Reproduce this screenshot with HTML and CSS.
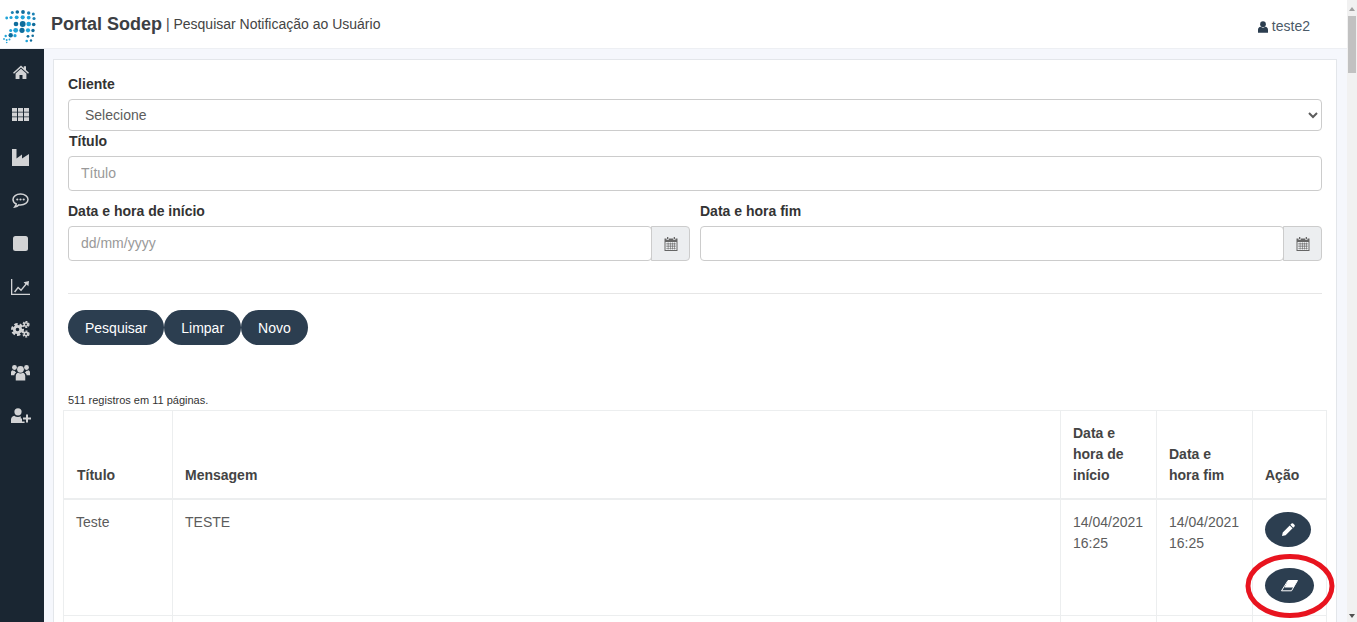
FILE: index.html
```html
<!DOCTYPE html>
<html lang="pt-BR">
<head>
<meta charset="utf-8">
<title>Portal Sodep</title>
<link rel="stylesheet" href="styles.css">
</head>
<body>
<div class="viewport">
  <div class="app">
    <header class="topbar">
      <div class="logo-box">
        <svg class="logo" viewBox="0 0 38 48" width="38" height="48" aria-hidden="true">
          <g fill="#1b82b5">
            <circle cx="12.3" cy="12.5" r="1.5"/><circle cx="17.3" cy="12" r="1.8" fill="#0f6d9c"/><circle cx="23" cy="12" r="1.9" fill="#0f6d9c"/><circle cx="28.7" cy="13" r="1.7"/><circle cx="33.3" cy="14" r="1.5"/>
            <circle cx="6.7" cy="18" r="1.4" fill="#1fa3d8"/><circle cx="11" cy="17.5" r="1.6" fill="#1fa3d8"/><circle cx="16.7" cy="17.3" r="1.9" fill="#1fa3d8"/><circle cx="22.7" cy="17.3" r="2.1" fill="#1fa3d8"/><circle cx="28.7" cy="17.6" r="1.9" fill="#1fa3d8"/><circle cx="34" cy="18.5" r="1.6"/>
            <circle cx="16" cy="24" r="2.3" fill="#0f6d9c"/><circle cx="22.7" cy="24" r="2.9" fill="#0f6d9c"/><circle cx="28.7" cy="24" r="2.3" fill="#1fa3d8"/><circle cx="33.7" cy="24.5" r="1.8" fill="#0f6d9c"/>
            <circle cx="10.7" cy="30.5" r="1.5" fill="#1fa3d8"/><circle cx="15.7" cy="30.3" r="2.4" fill="#1fa3d8"/><circle cx="22" cy="30.3" r="2.6" fill="#0f6d9c"/><circle cx="28" cy="30.3" r="2.1" fill="#1fa3d8"/><circle cx="33" cy="30.5" r="1.7" fill="#0f6d9c"/>
            <circle cx="5.7" cy="36" r="1.2" fill="#1fa3d8"/><circle cx="10.7" cy="35.3" r="2.2" fill="#0f6d9c"/><circle cx="15" cy="35.7" r="1.6" fill="#1fa3d8"/><circle cx="28" cy="36.3" r="1.4" fill="#0f6d9c"/><circle cx="32.7" cy="35.7" r="1.3" fill="#0f6d9c"/>
            <circle cx="4" cy="39" r=".9" fill="#1fa3d8"/><circle cx="6.7" cy="40" r="1" fill="#1fa3d8"/><circle cx="9.5" cy="39.5" r="1" fill="#1fa3d8"/><circle cx="6.7" cy="42.5" r=".8" fill="#1fa3d8"/><circle cx="26.7" cy="41" r="1.3" fill="#1fa3d8"/><circle cx="31" cy="40.5" r="1.2" fill="#0f6d9c"/>
          </g>
        </svg>
      </div>
      <div class="brand"><strong class="brand-name">Portal Sodep</strong> <span class="brand-sep">|</span> <span class="brand-page">Pesquisar Notificação ao Usuário</span></div>
      <div class="user">
        <svg class="user-icon" viewBox="0 0 12 14" width="10" height="12" aria-hidden="true"><circle cx="6" cy="3.6" r="3.4"/><path d="M0 14V10.4C0 8.4 1.4 7 3 6.8c.8.6 1.900 1 3 1s2.200-.4 3-1c1.600.2 3 1.600 3 3.600V14z"/></svg>
        <span>teste2</span>
      </div>
    </header>
    <div class="workspace">
      <nav class="sidebar">
        <span class="nav-item"><svg class="nav-icon" viewBox="0 0 16 14" width="16" height="14" aria-hidden="true"><path d="M8 .5 10.800 3V1.300h2.200v3.700L16 7.700l-1 1.100L8 2.600 1 8.800 0 7.700z"/><path d="M2.600 8.500 8 3.800l5.400 4.700V14H9.500v-4h-3v4H2.600z"/></svg></span>
        <span class="nav-item"><svg class="nav-icon" viewBox="0 0 17 13" width="17" height="13" aria-hidden="true"><path d="M0 0h5v3.800H0zM6 0h5v3.800H6zM12 0h5v3.800h-5zM0 4.600h5v3.800H0zM6 4.600h5v3.800H6zM12 4.600h5v3.800h-5zM0 9.200h5V13H0zM6 9.200h5V13H6zM12 9.200h5V13h-5z"/></svg></span>
        <span class="nav-item"><svg class="nav-icon" viewBox="0 0 17 17" width="17" height="17" aria-hidden="true"><path d="M0 0h4.500v9.500L10 5.500v4l7-4.500v12H0z"/></svg></span>
        <span class="nav-item"><svg class="nav-icon" viewBox="0 0 17 16" width="17" height="16" aria-hidden="true"><path class="nav-line" d="M8.500 1C4.300 1 1 3.400 1 6.500c0 1.900 1.200 3.500 3.200 4.500-.2 1-.8 2.200-1.400 3 1.700-.3 3.200-1.200 4.100-2.100.5.100 1 .1 1.600.1 4.200 0 7.500-2.500 7.500-5.500S12.700 1 8.500 1z"/><circle cx="5.300" cy="6.500" r="1.100"/><circle cx="8.500" cy="6.500" r="1.100"/><circle cx="11.700" cy="6.500" r="1.100"/></svg></span>
        <span class="nav-item"><svg class="nav-icon" viewBox="0 0 15 15" width="15" height="15" aria-hidden="true"><rect width="15" height="15" rx="2.500"/></svg></span>
        <span class="nav-item"><svg class="nav-icon" viewBox="0 0 19 16" width="19" height="16" aria-hidden="true"><path d="M0 0h1.300v14.700H19V16H0z"/><path d="M3 12.500 7 7.500l3 2.800 4.300-5.300-1.700-1.700L18 2l-.6 5.300-1.700-1.700L10.100 12.300 7.200 9.600 4.200 13.400z"/></svg></span>
        <span class="nav-item"><svg class="nav-icon" viewBox="0 0 19 17" width="19" height="17" aria-hidden="true"><circle class="gear-teeth" cx="6.500" cy="8.500" r="5.300"/><circle class="gear-ring" cx="6.500" cy="8.500" r="3.200"/><circle class="gear-small-teeth" cx="15" cy="3.500" r="2.900"/><circle class="gear-small-ring" cx="15" cy="3.500" r="1.700"/><circle class="gear-small-teeth" cx="15" cy="13" r="2.900"/><circle class="gear-small-ring" cx="15" cy="13" r="1.700"/></svg></span>
        <span class="nav-item"><svg class="nav-icon" viewBox="0 0 18 15" width="19" height="17" aria-hidden="true"><circle cx="9" cy="4.500" r="3.200"/><circle cx="3.300" cy="2.800" r="2.300"/><circle cx="14.700" cy="2.800" r="2.300"/><path d="M4.500 15V11c0-2 1.200-3 2.300-3.200.6.500 1.300.7 2.200.7s1.600-.2 2.200-.7c1.100.2 2.300 1.200 2.300 3.200v4z"/><path d="M0 10V7.500C0 6 .8 5.500 1.500 5.300c.5.400 1.100.6 1.800.6.400.7 1 1.300 1.700 1.700-1.200.6-1.700 1.500-1.800 2.400zM18 10V7.500c0-1.500-.8-2-1.500-2.200-.5.400-1.100.6-1.800.6-.4.700-1 1.300-1.700 1.700 1.200.6 1.700 1.500 1.800 2.400z"/></svg></span>
        <span class="nav-item"><svg class="nav-icon" viewBox="0 0 20 15" width="20" height="15" aria-hidden="true"><circle cx="7" cy="3.800" r="3.600"/><path d="M0 15v-3.500C0 9.500 1.500 8 3.200 7.700c1 .8 2.300 1.200 3.800 1.200 1 0 2-.2 2.800-.6v2.100h1.200v3.100H13.600V15z"/><path d="M15 6.500h2v3h3v2h-3v3h-2v-3h-3v-2h3z"/></svg></span>
      </nav>
      <main class="content">
        <section class="card">
          <form class="filter-form">
            <label class="field-label" for="cliente">Cliente</label>
            <select class="control select-control" id="cliente"><option>Selecione</option></select>
            <label class="field-label field-label-nudge" for="titulo">Título</label>
            <input class="control text-control" id="titulo" type="text" placeholder="Título">
            <div class="date-grid">
              <div class="date-field">
                <label class="field-label" for="inicio">Data e hora de início</label>
                <div class="input-group">
                  <input class="control text-control group-input" id="inicio" type="text" placeholder="dd/mm/yyyy">
                  <span class="addon">
                    <svg class="calendar" viewBox="0 0 14 14" width="14" height="14" aria-hidden="true"><path d="M3 0h1.300v2H3zM9.700 0H11v2H9.700zM.5 1.500h2v1.300h2.300V1.500h4.400v1.300h2.300V1.500h2V14H.5zM1.500 5v8h11V5z"/><path d="M2.200 6.600h9.600v.6H2.200zM2.200 8.800h9.600v.6H2.200zM2.200 11h9.600v.6H2.200zM3.800 5.500h.6v7h-.6zM6 5.500h.6v7H6zM8.200 5.500h.6v7h-.6zM10.400 5.500h.6v7h-.6z"/></svg>
                  </span>
                </div>
              </div>
              <div class="date-field">
                <label class="field-label" for="fim">Data e hora fim</label>
                <div class="input-group">
                  <input class="control text-control group-input" id="fim" type="text">
                  <span class="addon">
                    <svg class="calendar" viewBox="0 0 14 14" width="14" height="14" aria-hidden="true"><path d="M3 0h1.300v2H3zM9.700 0H11v2H9.700zM.5 1.500h2v1.300h2.300V1.500h4.400v1.300h2.300V1.500h2V14H.5zM1.500 5v8h11V5z"/><path d="M2.200 6.600h9.600v.6H2.200zM2.200 8.800h9.600v.6H2.200zM2.200 11h9.600v.6H2.200zM3.800 5.500h.6v7h-.6zM6 5.500h.6v7H6zM8.200 5.500h.6v7h-.6zM10.400 5.500h.6v7h-.6z"/></svg>
                  </span>
                </div>
              </div>
            </div>
            <hr class="divider">
            <div class="actions">
              <button class="pill" type="button">Pesquisar</button>
              <button class="pill" type="button">Limpar</button>
              <button class="pill" type="button">Novo</button>
            </div>
          </form>
          <p class="summary">511 registros em 11 páginas.</p>
          <table class="results">
            <colgroup>
              <col class="col-title"><col class="col-message"><col class="col-date"><col class="col-date"><col class="col-action">
            </colgroup>
            <thead>
              <tr><th class="th-first">Título</th><th>Mensagem</th><th>Data e hora de início</th><th>Data e hora fim</th><th>Ação</th></tr>
            </thead>
            <tbody>
              <tr>
                <td>Teste</td>
                <td>TESTE</td>
                <td>14/04/2021 16:25</td>
                <td>14/04/2021 16:25</td>
                <td>
                  <div class="row-actions">
                    <button class="round-btn" type="button" aria-label="Editar">
                      <svg viewBox="0 0 14 14" width="13" height="13" aria-hidden="true"><path d="M10.300.6a1.200 1.200 0 0 1 1.700 0l1.400 1.400a1.200 1.200 0 0 1 0 1.700l-1.300 1.300L9 1.900zM8.300 2.600l3.100 3.100-7.500 7.500L0 14l.8-3.900z"/></svg>
                    </button>
                    <span class="erase-wrap">
                      <button class="round-btn round-btn-wide" type="button" aria-label="Apagar">
                        <svg viewBox="0 0 17 12" width="17" height="12" aria-hidden="true"><path d="M7 .5H16.500L10.500 10.800H.5z" fill="none" stroke="#fff" stroke-width="1"/><path d="M7 .5H16.500L12.500 7.500H3.500z"/></svg>
                      </button>
                      <svg class="annotation" viewBox="0 0 90 66" width="90" height="66" aria-hidden="true"><ellipse cx="45" cy="33" rx="42" ry="29.500" fill="none" stroke="#e8141f" stroke-width="5"/></svg>
                    </span>
                  </div>
                </td>
              </tr>
              <tr><td>&nbsp;</td><td></td><td></td><td></td><td></td></tr>
            </tbody>
          </table>
        </section>
      </main>
    </div>
  </div>
  <div class="scrollbar" aria-hidden="true">
    <span class="arrow-up"></span>
    <span class="thumb"></span>
    <span class="track"></span>
    <span class="arrow-down"></span>
  </div>
</div>
</body>
</html>
```
FILE: styles.css
```css
* { box-sizing: border-box; }
html, body { margin: 0; padding: 0; height: 100%; overflow: hidden; }
body { font-family: "Liberation Sans", Arial, sans-serif; font-size: 14px; line-height: 21px; color: #5c5c5c; background: #f5f7fc; }

.viewport { display: flex; width: 1357px; height: 622px; overflow: hidden; }
.app { flex: 1; min-width: 0; display: flex; flex-direction: column; }

.topbar { flex: none; height: 49px; display: flex; align-items: flex-start; background: #fff; border-bottom: 1px solid #edeff3; }
.logo-box { flex: none; width: 51px; height: 48px; }
.logo { display: block; }
.brand { padding-top: 12px; line-height: 24px; color: #444; white-space: nowrap; }
.brand-name { font-size: 18px; color: #3c3f44; }
.brand-sep { font-size: 14px; vertical-align: 1px; }
.brand-page { font-size: 14px; vertical-align: 1px; }
.user { margin-left: auto; padding: 16px 37px 0 0; display: flex; align-items: center; gap: 4px; color: #4b5a68; }
.user-icon { fill: #2c3e50; }

.workspace { flex: 1; min-height: 0; display: flex; }
.sidebar { flex: none; width: 44px; background: #1a2632; display: flex; flex-direction: column; padding: 1px 3px 0 0; }
.nav-item { flex: none; height: 43px; display: flex; align-items: center; justify-content: center; }
.nav-icon { display: block; fill: #d2d3d5; }
.nav-line { fill: none; stroke: #d2d3d5; stroke-width: 1.500; }
.gear-teeth { fill: none; stroke: #d2d3d5; stroke-width: 2.400; stroke-dasharray: 3.300 2; }
.gear-ring { fill: none; stroke: #d2d3d5; stroke-width: 2.800; }
.gear-small-teeth { fill: none; stroke: #d2d3d5; stroke-width: 1.400; stroke-dasharray: 2 1.200; }
.gear-small-ring { fill: none; stroke: #d2d3d5; stroke-width: 1.500; }

.content { flex: 1; min-width: 0; padding: 10px 10px 0 9px; }
.card { background: #fff; border: 1px solid #e3e6ea; border-bottom: 0; padding: 14px 14px 0; height: 600px; }

.filter-form { display: flex; flex-direction: column; }
.field-label { display: block; font-weight: 700; color: #333; margin-bottom: 4px; line-height: 21px; }
.field-label-nudge { padding-left: 1px; }
.control { display: block; width: 100%; font-family: inherit; font-size: 14px; color: #5c5c5c; background: #fff; border: 1px solid #ccc; border-radius: 4px; }
.control::placeholder { color: #999; opacity: 1; }
.select-control { height: 32px; padding: 0 0 0 12px; }
.text-control { height: 35px; padding: 0 12px 2px; }

.date-grid { display: grid; grid-template-columns: 1fr 1fr; gap: 10px; margin-top: 10px; }
.input-group { display: flex; }
.group-input { flex: 1; min-width: 0; width: auto; }
.addon { flex: none; width: 39px; height: 35px; margin-left: -1px; display: flex; align-items: center; justify-content: center; background: #eceef0; border: 1px solid #ccc; border-radius: 0 4px 4px 0; }
.calendar { fill: #666; }

.divider { width: 100%; height: 1px; margin: 32px 0 16px; border: 0; background: #e6e6e6; }
.actions { display: flex; }
.pill { height: 35px; padding: 0 17px; font-family: inherit; font-size: 14px; color: #fff; background: #2c3e50; border: 0; border-radius: 18px; }

.summary { margin: 48px 0 0; padding-top: 1px; font-size: 11px; line-height: 13px; color: #333; }

.results { width: 1263px; margin: 3px -5px 0; table-layout: fixed; border-collapse: collapse; }
.col-title { width: 109px; }
.col-message { width: 888px; }
.col-date { width: 96px; }
.col-action { width: 74px; }
.results th, .results td { padding: 12px; border: 1px solid #eceeef; text-align: left; vertical-align: top; }
.results th { vertical-align: bottom; font-weight: 700; color: #444; border-bottom-width: 2px; }
.results .th-first { padding-left: 13px; }

.row-actions { display: flex; flex-direction: column; align-items: flex-start; gap: 21px; }
.round-btn { width: 46px; height: 35px; padding: 0; display: flex; align-items: center; justify-content: center; background: #2c3e50; border: 0; border-radius: 50%; }
.round-btn svg { display: block; fill: #fff; }
.round-btn-wide { width: 49px; }
.erase-wrap { position: relative; display: block; }
.annotation { position: absolute; left: -20px; top: -15px; pointer-events: none; }

.scrollbar { flex: none; width: 10px; display: flex; flex-direction: column; align-items: center; background: #f1f1f1; }
.arrow-up { flex: none; width: 0; height: 0; margin: 7px 0 5px; border-left: 3.500px solid transparent; border-right: 3.500px solid transparent; border-bottom: 4px solid #a0a0a0; }
.thumb { flex: none; width: 8px; height: 57px; background: #c1c1c1; }
.track { flex: 1; }
.arrow-down { flex: none; width: 0; height: 0; margin: 0 0 4px; border-left: 3.500px solid transparent; border-right: 3.500px solid transparent; border-top: 4px solid #505050; }
```
